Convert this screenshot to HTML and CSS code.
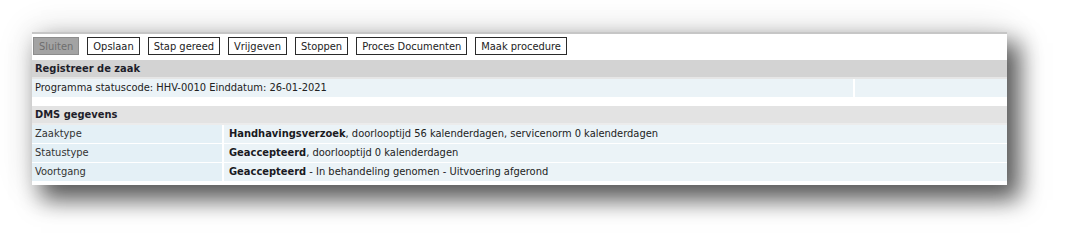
FILE: index.html
```html
<!DOCTYPE html>
<html>
<head>
<meta charset="utf-8">
<link rel="stylesheet" href="styles.css">
</head>
<body>
<div class="stage">
<div class="panel">
  <div class="toolbar">
    <button class="btn disabled">Sluiten</button>
    <button class="btn">Opslaan</button>
    <button class="btn">Stap gereed</button>
    <button class="btn">Vrijgeven</button>
    <button class="btn">Stoppen</button>
    <button class="btn">Proces Documenten</button>
    <button class="btn">Maak procedure</button>
  </div>
  <div class="section-head dark">Registreer de zaak</div>
  <div class="status-row">
    <div class="cell">Programma statuscode: HHV-0010 Einddatum: 26-01-2021</div>
    <div class="cell"></div>
  </div>
  <div class="spacer"></div>
  <div class="section-head light">DMS gegevens</div>
  <div class="grid">
    <div class="label">Zaaktype</div>
    <div class="value"><b>Handhavingsverzoek</b>, doorlooptijd 56 kalenderdagen, servicenorm 0 kalenderdagen</div>
    <div class="label">Statustype</div>
    <div class="value"><b>Geaccepteerd</b>, doorlooptijd 0 kalenderdagen</div>
    <div class="label">Voortgang</div>
    <div class="value"><b>Geaccepteerd</b> - In behandeling genomen - Uitvoering afgerond</div>
  </div>
</div>
</div>
</body>
</html>
```

FILE: styles.css
```css
html, body {
  margin: 0;
  padding: 0;
  background: #ffffff;
}
body {
  font-family: "DejaVu Sans", Verdana, sans-serif;
  font-stretch: condensed;
  font-size: 11px;
  color: #222;
}
.stage {
  height: 250px;
  padding: 32px 0 0 32px;
  box-sizing: border-box;
  background: #ffffff;
}
.panel {
  width: 975px;
  border-top: 2px solid #c6c6c6;
  background: #ffffff;
  padding-bottom: 4px;
  box-shadow: 11px 13px 22px 2px rgba(0,0,0,0.62), 0 0 34px rgba(0,0,0,0.14);
}
.toolbar {
  display: flex;
  gap: 8px;
  padding: 3px 1px 5px 1px;
}
.btn {
  font-family: "DejaVu Sans", Verdana, sans-serif;
  font-stretch: condensed;
  font-size: 11px;
  color: #222;
  background: #fff;
  border: 1px solid #2a2a2a;
  height: 18px;
  padding: 0 5px;
  margin: 0;
  line-height: 15px;
}
.btn.disabled {
  background: #a3a3a3;
  border-color: #8c8c8c;
  color: #6e6e6e;
}
.section-head {
  font-weight: bold;
  height: 17px;
  line-height: 17px;
  padding-left: 3px;
  color: #1e1e2a;
}
.section-head.dark {
  background: #d3d3d3;
  border-bottom: 2px solid #e6e6e6;
}
.section-head.light {
  background: #e3e3e3;
  border-bottom: 2px solid #ececec;
}
.status-row {
  display: grid;
  grid-template-columns: 821px 1fr;
  gap: 2px;
}
.cell {
  background: #ebf3f7;
  height: 18px;
  line-height: 18px;
  padding-left: 3px;
}
.spacer {
  height: 9px;
}
.grid {
  display: grid;
  grid-template-columns: 190px 1fr;
  gap: 1px 2px;
}
.label {
  background: #e4f0f6;
  height: 18px;
  line-height: 18px;
  padding-left: 3px;
  color: #333;
}
.value {
  background: #ebf3f7;
  height: 18px;
  line-height: 18px;
  padding-left: 5px;
  color: #222;
}
.value b {
  color: #1a1a22;
}
```
